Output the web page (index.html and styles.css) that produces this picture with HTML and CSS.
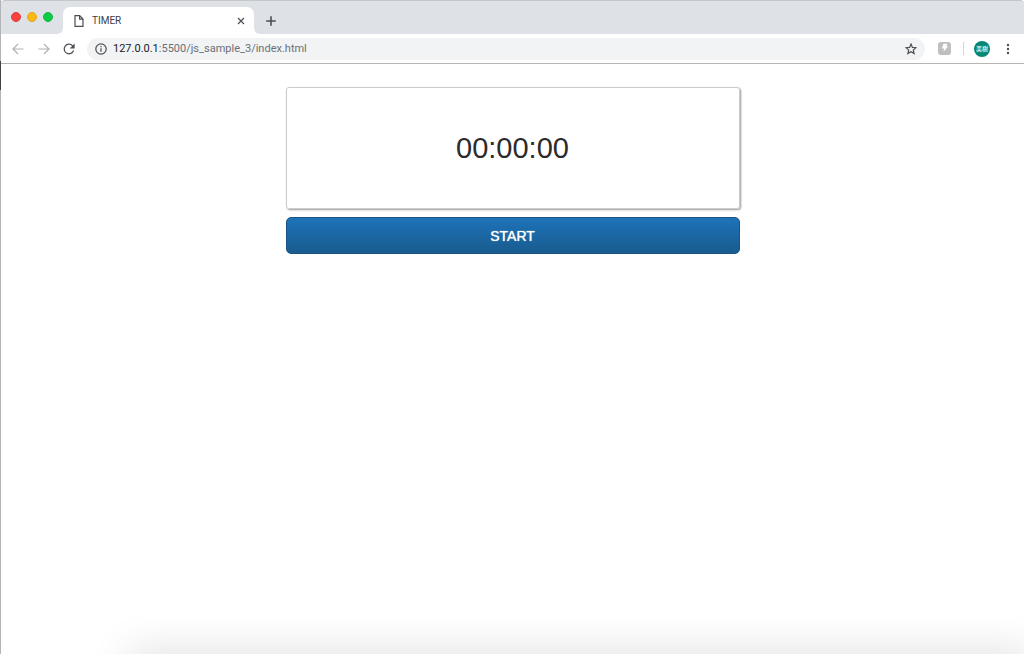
FILE: index.html
```html
<!DOCTYPE html>
<html lang="en">
<head>
<meta charset="utf-8">
<title>TIMER</title>
<link rel="stylesheet" href="styles.css">
</head>
<body>
<div class="window">
  <header class="tabs">
    <div class="lights">
      <button class="light red" aria-label="Close window"></button>
      <button class="light yellow" aria-label="Minimize window"></button>
      <button class="light green" aria-label="Zoom window"></button>
    </div>
    <div class="tab">
      <svg class="page-icon" viewBox="0 0 10 12" width="10" height="12"><path d="M1 .7h4.700L9 4v7.300H1zM5.600.8V4.100H9"/></svg>
      <span class="tab-title">TIMER</span>
      <button class="icon-button" aria-label="Close tab"><svg viewBox="0 0 8 8" width="8" height="8"><path d="M1 1l6 6M7 1L1 7"/></svg></button>
    </div>
    <button class="icon-button new-tab" aria-label="New tab"><svg viewBox="0 0 10 10" width="10" height="10"><path d="M5 .2v9.600M.2 5h9.600"/></svg></button>
  </header>
  <nav class="toolbar">
    <button class="icon-button faded" aria-label="Back"><svg viewBox="0 0 12 12" width="12" height="12"><path d="M11.500 6H1M6 1L1 6l5 5"/></svg></button>
    <button class="icon-button faded" aria-label="Forward"><svg viewBox="0 0 12 12" width="12" height="12"><path d="M.5 6H11M6 1l5 5-5 5"/></svg></button>
    <button class="icon-button reload" aria-label="Reload"><svg viewBox="0 0 12 12" width="12" height="12"><path d="M10.600 7.400A4.800 4.800 0 1 1 9.600 2.800L10.600 4"/><path class="solid" d="M11.600.6v4.800H6.800z"/></svg></button>
    <div class="address">
      <svg viewBox="0 0 12 12" width="12" height="12"><circle cx="6" cy="6" r="5.200"/><path d="M6 5.300v3.500M6 3v1.300"/></svg>
      <div class="url" role="textbox" contenteditable="true" spellcheck="false" aria-label="Address">127.0.0.1<span class="path">:5500/js_sample_3/index.html</span></div>
      <button class="icon-button" aria-label="Bookmark"><svg viewBox="0 0 12 12" width="12" height="12"><path d="M6 1.100l1.400 3.300 3.600.3-2.700 2.400.8 3.500L6 8.700l-3.100 1.900.8-3.500L1 4.700l3.600-.3z"/></svg></button>
    </div>
    <button class="icon-button extension" aria-label="Extension"><svg viewBox="0 0 13 13" width="13" height="13"><rect class="tile" width="13" height="13" rx="3"/><path class="bolt" d="M5.400 1.800h4L8.300 4.600h1.900L5.400 9.800l.8-3.200H4z"/></svg></button>
    <span class="divider"></span>
    <button class="avatar" aria-label="Profile">美樹</button>
    <button class="icon-button menu" aria-label="Menu"><svg viewBox="0 0 4 12" width="4" height="12"><circle class="solid" cx="2" cy="2" r="1.200"/><circle class="solid" cx="2" cy="6" r="1.200"/><circle class="solid" cx="2" cy="10" r="1.200"/></svg></button>
  </nav>
  <main class="page">
    <div class="timer" role="timer">00:00:00</div>
    <button class="start">START</button>
  </main>
</div>
</body>
</html>
```
FILE: styles.css
```css
* { box-sizing: border-box; }
body { margin: 0; background: #fff; font-family: Roboto, "Noto Sans CJK JP", sans-serif; }
button { padding: 0; border: 0; background: none; font: inherit; }
svg { display: block; flex: none; fill: none; stroke: #4b4f54; stroke-width: 1.2; }
.solid { fill: #4b4f54; stroke: none; }
.window { position: relative; display: flex; flex-direction: column; min-height: 100vh; padding-left: 1px; background: linear-gradient(#b4b4b4, #b4b4b4) left / 1px 100% no-repeat; overflow: hidden; }
.window::before { content: ""; position: absolute; left: 0; top: 61px; width: 1px; height: 29px; background: #444; }
.window::after { content: ""; position: absolute; left: 132px; right: -4px; bottom: -30px; height: 30px; box-shadow: 0 0 40px 4px rgba(0, 0, 0, .12); }
.tabs { display: flex; align-items: flex-end; height: 34px; background: #dee1e6; border-top: 1px solid #c4c6ca; border-radius: 4px 4px 0 0; }
.lights { display: flex; gap: 6px; width: 62px; height: 33px; padding: 11px 0 0 10px; }
.light { width: 10px; height: 10px; border-radius: 50%; }
.red { background: #f9423f; border: 1px solid #e23b3a; }
.yellow { background: #fcb813; border: 1px solid #e5a51c; }
.green { background: #0bcb45; border: 1px solid #11b73e; }
.tab { position: relative; display: flex; align-items: center; width: 191px; height: 27px; padding: 0 8px 0 11px; background: #fff; border-radius: 7px 7px 0 0; }
.tab::before, .tab::after { content: ""; position: absolute; bottom: 0; width: 6px; height: 6px; }
.tab::before { right: 100%; background: radial-gradient(circle at 0 0, transparent 6px, #fff 6px); }
.tab::after { left: 100%; background: radial-gradient(circle at 100% 0, transparent 6px, #fff 6px); }
.tab-title { flex: 1; margin-left: 8px; font-size: 10px; line-height: 14px; color: #3c4043; }
.icon-button { display: grid; place-items: center; flex: none; width: 10px; height: 16px; }
.new-tab { width: 34px; height: 27px; }
.new-tab svg { stroke-width: 1.6; }
.toolbar { display: flex; align-items: center; height: 30px; padding-left: 11px; border-bottom: 1px solid #b6b6b6; background: #fff; }
.toolbar > .icon-button { width: 12px; margin-right: 14px; }
.toolbar > .reload { margin: 0 14px 0 -1px; }
.faded svg { stroke: #b0b2b5; }
.address { display: flex; align-items: center; flex: 1; height: 22px; margin-left: -2px; padding: 0 10px 0 8px; border-radius: 11px; background: #f1f3f4; }
.url { flex: 1; margin-left: 6px; font-size: 11px; line-height: 16px; color: #202124; white-space: nowrap; outline: none; }
.path { color: #6b7075; }
.toolbar > .extension { width: 13px; margin: 0 12px 0 13px; }
.tile { fill: #bfbfbf; stroke: none; }
.bolt { fill: #fff; stroke: none; }
.divider { width: 1px; height: 13px; background: #d5d7da; }
.avatar { width: 16px; height: 16px; margin: 0 16px 0 10px; border-radius: 50%; background: #078877; color: #e8f7f4; font-size: 6px; font-weight: 500; line-height: 16px; white-space: nowrap; }
.toolbar > .menu { width: 4px; }
.page { display: flex; flex-direction: column; align-items: center; gap: 8px; padding: 23px 24px; font-family: "Liberation Sans", Arial, sans-serif; }
.timer { width: 100%; max-width: 454px; padding: 40px 16px; border: 1px solid #ccc; border-radius: 3px; box-shadow: 1px 1px 2px #999; font-size: 29px; line-height: 40px; text-align: center; color: #2b2b2b; }
.start { width: 100%; max-width: 454px; height: 37px; border: 1px solid #1b5482; border-radius: 5px; background: linear-gradient(#1d73b9, #195b8e); color: #fff; font-size: 14px; line-height: 20px; text-shadow: 0 0 1px #fff; }
```
